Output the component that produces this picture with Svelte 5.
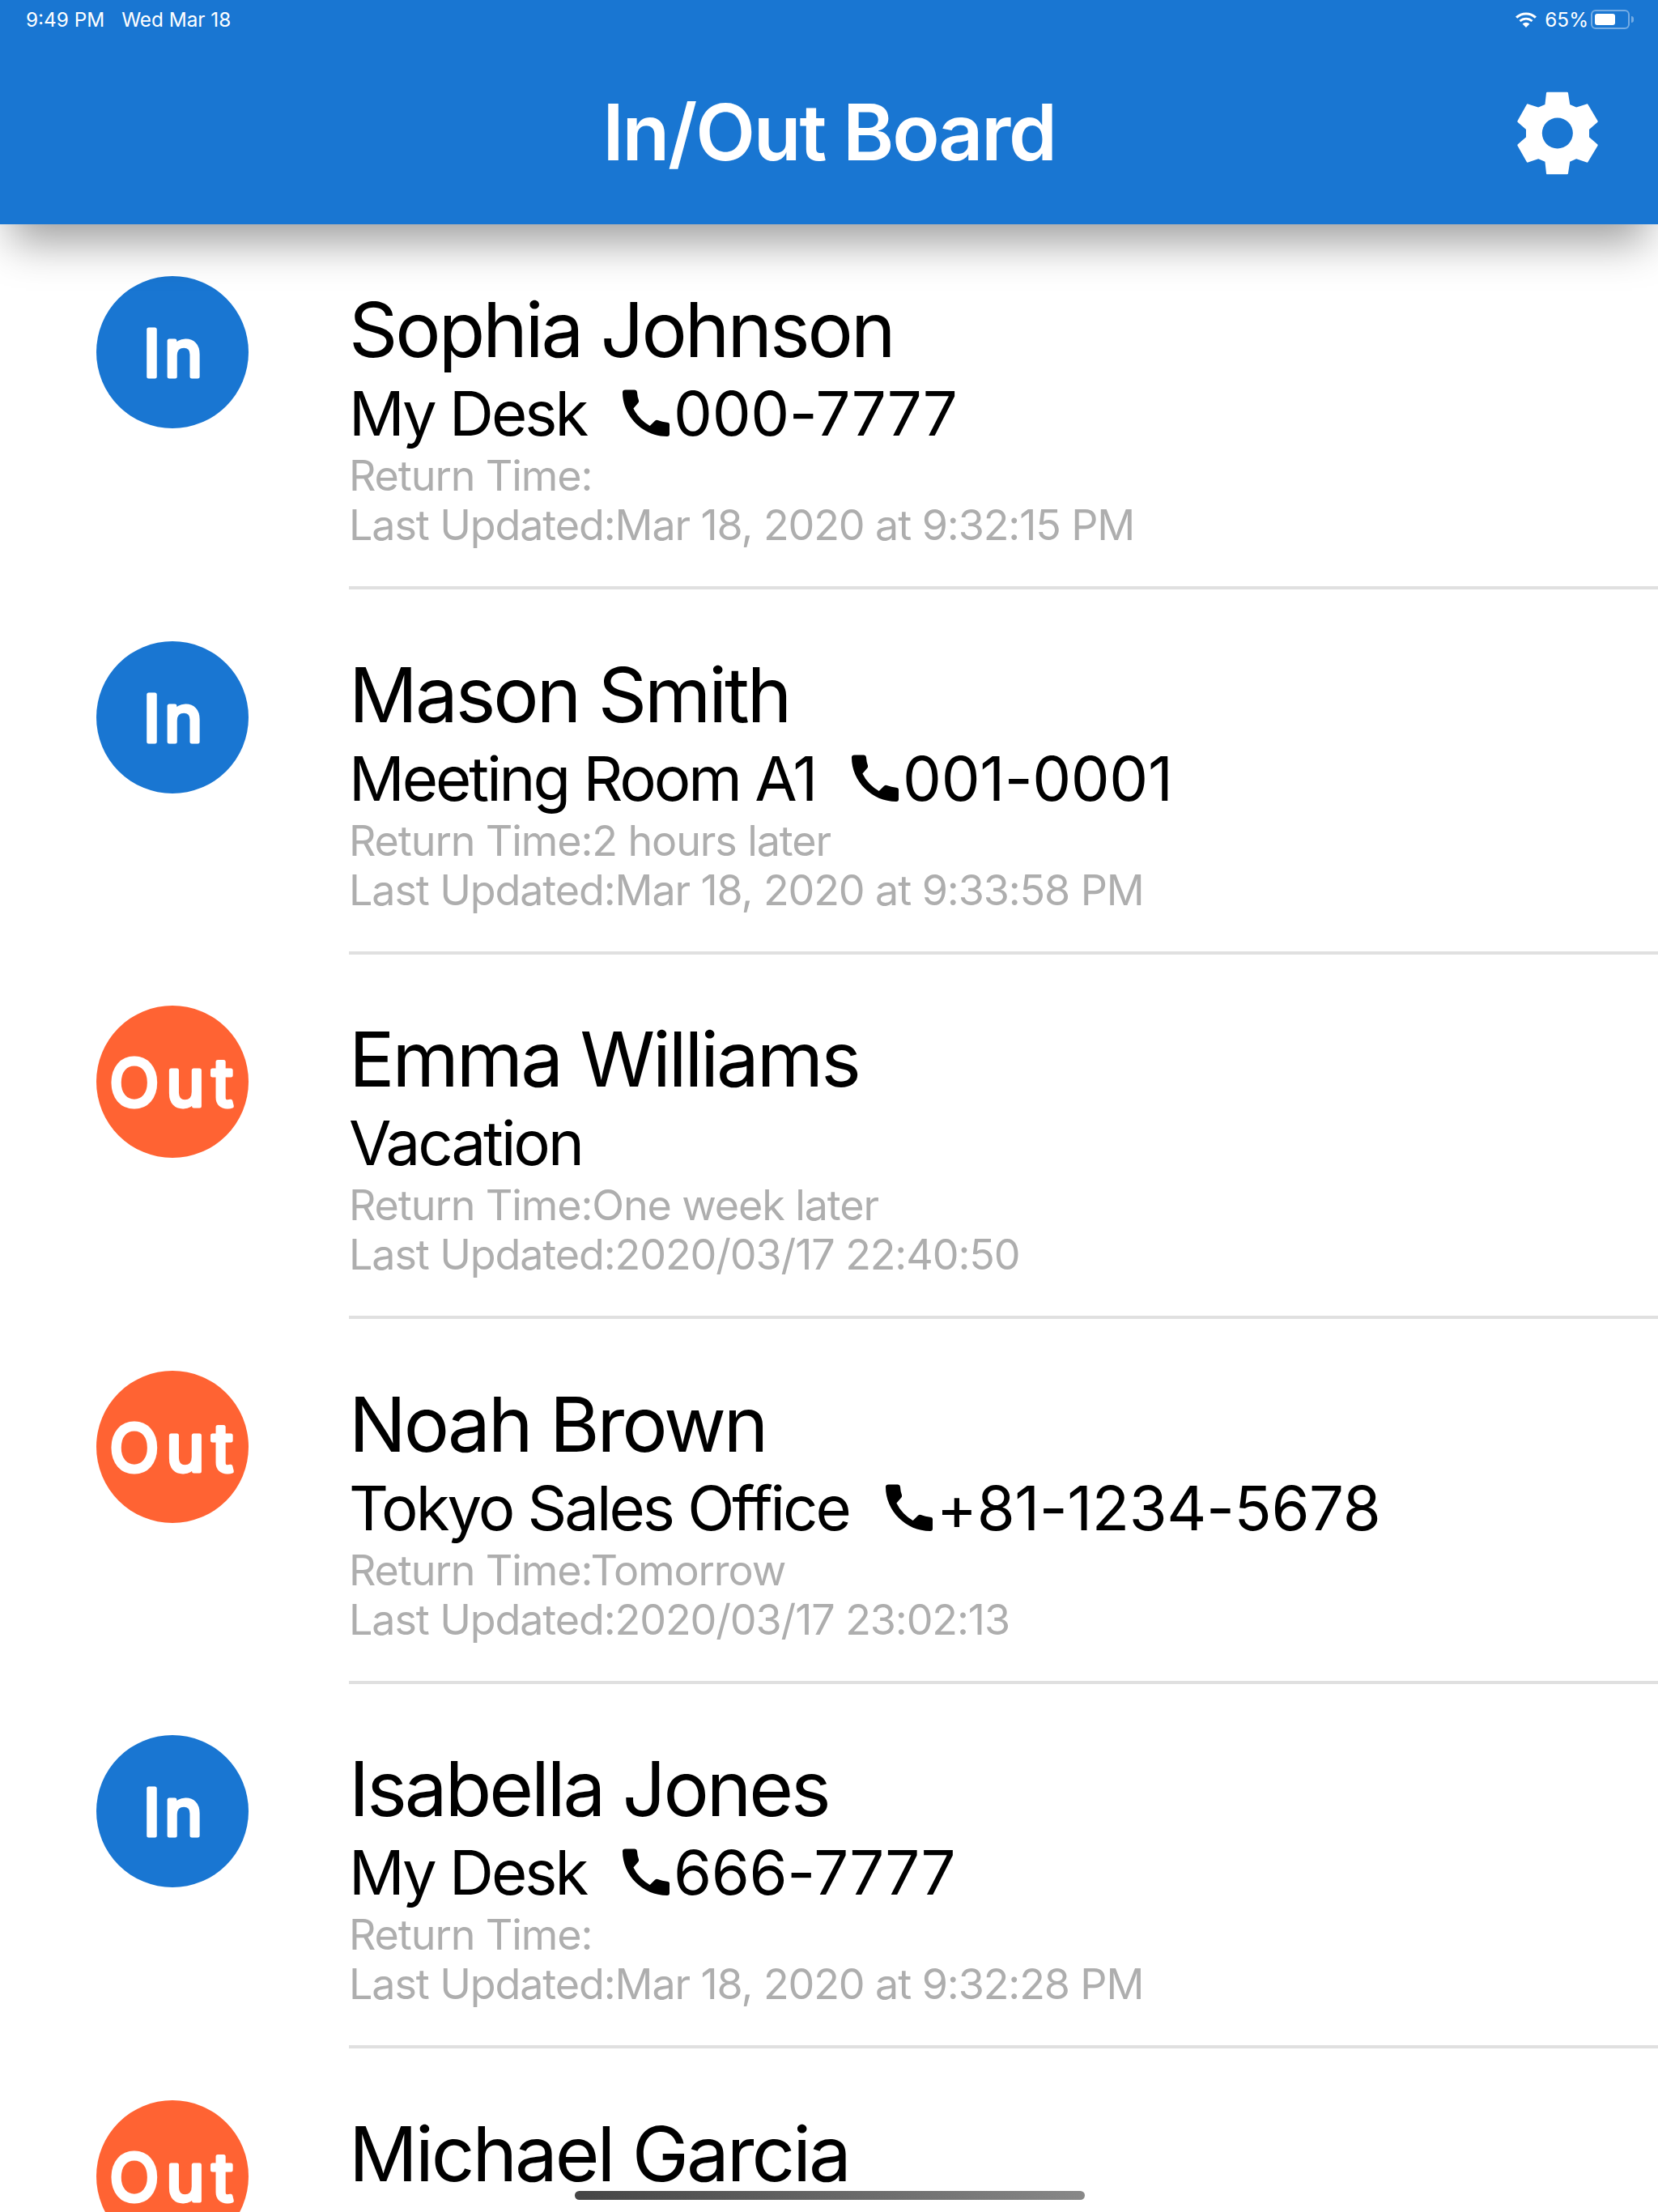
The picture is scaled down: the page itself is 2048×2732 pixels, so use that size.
<script>
  const people = [
    { name: 'Sophia Johnson', status: 'In', place: 'My Desk', phone: '000-7777', back: '', updated: 'Mar 18, 2020 at 9:32:15 PM' },
    { name: 'Mason Smith', status: 'In', place: 'Meeting Room A1', phone: '001-0001', back: '2 hours later', updated: 'Mar 18, 2020 at 9:33:58 PM' },
    { name: 'Emma Williams', status: 'Out', place: 'Vacation', phone: '', back: 'One week later', updated: '2020/03/17 22:40:50' },
    { name: 'Noah Brown', status: 'Out', place: 'Tokyo Sales Office', phone: '+81-1234-5678', back: 'Tomorrow', updated: '2020/03/17 23:02:13' },
    { name: 'Isabella Jones', status: 'In', place: 'My Desk', phone: '666-7777', back: '', updated: 'Mar 18, 2020 at 9:32:28 PM' },
    { name: 'Michael Garcia', status: 'Out', place: '', phone: '', back: '', updated: '' }
  ];

  const callPath = 'M3.5 .5L15 .5Q17.6 .5 17.9 3Q18.3 9 20 13.5Q20.5 15.5 19 17L13.4 23.5Q20 37 33.7 45L40 38.8Q41.5 37.5 43.5 38Q49 40.3 55 40.7Q58 41 58 43.5V55Q58 58 55 58C25 58 0 33 0 3.5Q0 .5 3.5 .5Z';
  const gearPoints = '485,345 558,345 565,390 592,402 632,389 668,450 636,478 636,510 668,538 632,598 592,584 565,596 558,642 485,642 480,596 452,584 412,598 378,538 410,510 410,478 378,450 412,389 452,402 480,390';
</script>

<div class="screen">
  <header class="header">
    <div class="statusbar">
      <div class="clock"><span>9:49 PM</span><span>Wed Mar 18</span></div>
      <div class="sys">
        <svg class="wifi" viewBox="0 0 28 20" width="28" height="20">
          <path d="M14 20l-4.4-4.6a6.4 6.4 0 0 1 8.8 0z" fill="#fff" />
          <path d="M7.4 13.1a9.6 9.6 0 0 1 13.2 0l1.9-2a12.4 12.4 0 0 0-17 0z" fill="#fff" />
          <path d="M3.2 8.8a15.6 15.6 0 0 1 21.6 0l2.2-2.2a18.8 18.8 0 0 0-26 0z" fill="#fff" />
        </svg>
        <span>65%</span>
        <div class="battery"><div class="level" style="width: 65%"></div></div>
        <div class="nub"></div>
      </div>
    </div>
    <div class="titlebar">
      <h1>In/Out Board</h1>
      <svg class="gear" viewBox="370 336 306 315" width="102" height="105">
        <polygon points={gearPoints} fill="#fff" stroke="#fff" stroke-width="8" stroke-linejoin="round" />
        <circle cx="522.5" cy="493.5" r="57" fill="#1976d2" />
      </svg>
    </div>
  </header>

  <main class="list">
    {#each people as p}
      <section class="row">
        <svg class="badge" viewBox="0 0 188 188" width="188" height="188">
          <circle cx="94" cy="94" r="94" fill={p.status === 'In' ? '#1976d2' : '#ff6333'} />
          <text class={p.status === 'In' ? 'in' : 'out'} x="97" y="124" text-anchor="middle">{p.status}</text>
        </svg>
        <div class="info">
          <div class="name">{p.name}</div>
          {#if p.place}
            <div class="place">
              <span>{p.place}</span>
              {#if p.phone}
                <span class="phone">
                  <svg viewBox="0 0 58 58" width="58" height="58"><path d={callPath} fill="#000" /></svg>
                  <span class="number">{p.phone}</span>
                </span>
              {/if}
            </div>
            <div class="meta">Return Time:{p.back}</div>
            <div class="meta">Last Updated:{p.updated}</div>
          {/if}
        </div>
      </section>
    {/each}
  </main>

  <div class="home"></div>
</div>

<style>
  :global(body) {
    margin: 0;
    background: #fff;
  }

  .screen {
    position: relative;
    width: 2048px;
    height: 2732px;
    overflow: hidden;
    font-family: Inter, "Liberation Sans", sans-serif;
    color: #000;
  }

  .header {
    position: relative;
    z-index: 2;
    height: 277px;
    background: #1976d2;
    color: #fff;
    box-shadow: 0 36px 50px -14px rgba(0, 0, 0, 0.38);
  }

  .statusbar {
    display: flex;
    justify-content: space-between;
    align-items: center;
    height: 48px;
    padding: 0 30px 0 32px;
    font-size: 24.3px;
  }

  .clock {
    display: flex;
    gap: 21px;
  }

  .sys {
    display: flex;
    align-items: center;
  }

  .wifi {
    margin-right: 9px;
  }

  .battery {
    box-sizing: border-box;
    width: 48px;
    height: 24px;
    margin-left: 3px;
    padding: 3px;
    border: 2px solid rgba(255, 255, 255, 0.4);
    border-radius: 6px;
  }

  .level {
    height: 100%;
    background: #fff;
    border-radius: 3px;
  }

  .nub {
    width: 3px;
    height: 8px;
    margin-left: 2px;
    background: rgba(255, 255, 255, 0.4);
    border-radius: 0 3px 3px 0;
  }

  .titlebar {
    position: relative;
    display: flex;
    justify-content: center;
    align-items: center;
    height: 229px;
  }

  h1 {
    margin: 0;
    font-size: 96px;
    font-weight: 600;
    letter-spacing: -2.2px;
  }

  .gear {
    position: absolute;
    left: 1873px;
    top: 64px;
  }

  .row {
    display: flex;
    box-sizing: border-box;
    height: 450.6px;
    padding: 64px 0 0 119px;
  }

  .badge {
    flex: none;
    margin-right: 124px;
  }

  .badge text {
    font-family: Inter, sans-serif;
    font-size: 80px;
    font-weight: 400;
    fill: #fff;
    stroke: #fff;
    stroke-width: 5px;
    stroke-linejoin: round;
  }

  .badge .in {
    letter-spacing: 5px;
  }

  .badge .out {
    letter-spacing: 9px;
  }

  .info {
    flex: 1;
    box-sizing: border-box;
    height: 387px;
    padding-top: 16px;
    border-bottom: 4px solid #e0e0e0;
  }

  .name {
    font-size: 94px;
    line-height: 100px;
    letter-spacing: -3px;
  }

  .place {
    display: flex;
    align-items: center;
    gap: 45px;
    margin-top: 3px;
    margin-bottom: -3px;
    font-size: 76px;
    line-height: 100px;
    letter-spacing: -3px;
  }

  .phone {
    display: flex;
    align-items: center;
  }

  .number {
    margin-left: 5px;
    letter-spacing: -0.4px;
  }

  .meta {
    font-size: 52px;
    line-height: 61px;
    color: #aeaeae;
    letter-spacing: -1.1px;
  }

  .home {
    position: absolute;
    z-index: 3;
    left: 710px;
    top: 2706px;
    width: 630px;
    height: 11px;
    border-radius: 6px;
    background: linear-gradient(90deg, #444, #888);
  }
</style>
